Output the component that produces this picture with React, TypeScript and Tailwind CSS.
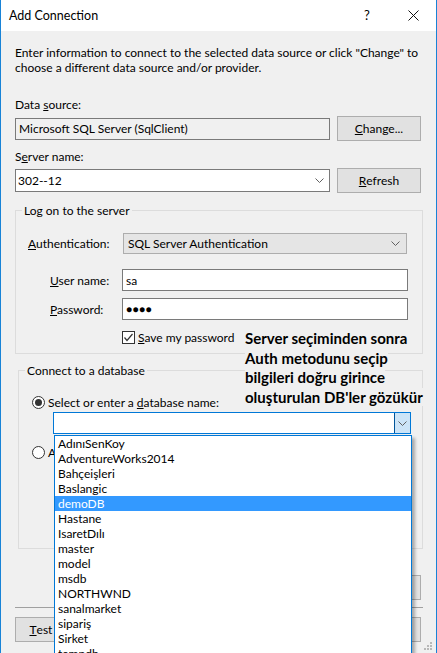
import React from "react";

const font = { fontFamily: "Lato, 'Open Sans', 'Noto Sans', sans-serif" };

function Chevron() {
  return (
    <svg width="9" height="5" viewBox="0 0 9 5" className="shrink-0">
      <polyline points="0.5,0.5 4.5,4.5 8.5,0.5" fill="none" stroke="#606060" strokeWidth="1" />
    </svg>
  );
}

function Button({ children, className = "" }: { children: React.ReactNode; className?: string }) {
  return (
    <div className={`flex h-[25px] items-center justify-center border border-[#adadad] bg-[#e1e1e1] ${className}`}>
      {children}
    </div>
  );
}

function Radio({ checked }: { checked?: boolean }) {
  return (
    <div className="flex h-[13px] w-[13px] shrink-0 items-center justify-center rounded-full border border-[#333] bg-white">
      {checked ? <div className="h-[7px] w-[7px] rounded-full bg-[#333]" /> : null}
    </div>
  );
}

const databases = [
  "AdınıSenKoy",
  "AdventureWorks2014",
  "Bahçeişleri",
  "Baslangic",
  "demoDB",
  "Hastane",
  "IsaretDılı",
  "master",
  "model",
  "msdb",
  "NORTHWND",
  "sanalmarket",
  "sipariş",
  "Sirket",
  "tempdb",
];

const note = ["Server seçiminden sonra", "Auth metodunu seçip", "bilgileri doğru girince", "oluşturulan DB'ler gözükür"];

export default function App() {
  return (
    <div
      style={font}
      className="relative h-[653px] w-[437px] overflow-hidden border-x border-[#1883d7] bg-[#f0f0f0] text-[12px] leading-[15px] text-black"
    >
      {/* title bar */}
      <div className="flex h-[31px] items-center bg-white">
        <span className="pl-[8px] text-[12.5px]">Add Connection</span>
        <div className="ml-auto flex h-full">
          <div className="flex w-[46px] items-center justify-center text-[13px]">?</div>
          <div className="flex w-[46px] items-center justify-center">
            <svg width="11" height="11" viewBox="0 0 11 11">
              <path d="M0.5 0.5 L10.5 10.5 M10.5 0.5 L0.5 10.5" stroke="#111" strokeWidth="1" />
            </svg>
          </div>
        </div>
      </div>

      <div className="flex flex-col pl-[14px] pr-[15px]">
        <p className="pt-[14px]">
          Enter information to connect to the selected data source or click "Change" to
          <br />
          choose a different data source and/or provider.
        </p>

        <div className="mt-[22px]">
          Data <span className="underline">s</span>ource:
        </div>
        <div className="mt-[4px] flex items-center gap-[7px]">
          <div className="flex h-[22px] w-[315px] items-center border border-[#7a7a7a] bg-[#f0f0f0] pl-[3px]">
            Microsoft SQL Server (SqlClient)
          </div>
          <Button className="w-[84px]">
            <span className="underline">C</span>hange...
          </Button>
        </div>

        <div className="mt-[8px]">
          S<span className="underline">e</span>rver name:
        </div>
        <div className="mt-[4px] flex items-center gap-[7px]">
          <div className="flex h-[23px] w-[315px] items-center border border-[#7a7a7a] bg-white pl-[2px] pr-[5px]">
            <span className="flex-1">302--12</span>
            <Chevron />
          </div>
          <Button className="h-[24px] w-[84px]">
            <span className="underline">R</span>efresh
          </Button>
        </div>

        <fieldset className="mr-[-2px] mt-[10px] border border-[#dcdcdc] pb-[9px]">
          <legend className="ml-[6px] px-[2px]">Log on to the server</legend>
          <div className="mt-[15px] flex items-center">
            <div className="w-[107px] pl-[12px]">
              <span className="underline">A</span>uthentication:
            </div>
            <div className="flex h-[21px] w-[284px] items-center border border-[#adadad] bg-[#e5e5e5] pl-[4px] pr-[6px]">
              <span className="flex-1">SQL Server Authentication</span>
              <Chevron />
            </div>
          </div>
          <div className="mt-[15px] flex items-center">
            <div className="w-[106px] pl-[34px]">
              <span className="underline">U</span>ser name:
            </div>
            <div className="flex h-[22px] w-[286px] items-center border border-[#7a7a7a] bg-white pl-[3px]">sa</div>
          </div>
          <div className="mt-[7px] flex items-center">
            <div className="w-[106px] pl-[34px]">
              <span className="underline">P</span>assword:
            </div>
            <div className="flex h-[22px] w-[286px] items-center border border-[#7a7a7a] bg-white pl-[3px] text-[10px] tracking-[0.5px]">
              ●●●●
            </div>
          </div>
          <div className="mt-[11px] flex h-[13px] items-center pl-[106px]">
            <div className="flex h-[13px] w-[13px] items-center justify-center border border-[#333] bg-white">
              <svg width="11" height="11" viewBox="0 0 11 11">
                <polyline points="1.5,5.5 4,8.5 9.5,2" fill="none" stroke="#333" strokeWidth="1.2" />
              </svg>
            </div>
            <span className="ml-[3px]">
              <span className="underline">S</span>ave my password
            </span>
          </div>
        </fieldset>

        <fieldset className="ml-[3px] mr-[-2px] mt-[9px] border border-[#dcdcdc] pb-[12px]">
          <legend className="ml-[6px] px-[2px]">Connect to a database</legend>
          <div className="mt-[17px] flex items-center pl-[13px]">
            <Radio checked />
            <span className="ml-[3px]">
              Select or enter a <span className="underline">d</span>atabase name:
            </span>
          </div>
          <div className="ml-[34px] mt-[2px] flex h-[22px] w-[358px] border border-[#0078d7] bg-white">
            <div className="flex-1" />
            <div className="flex w-[16px] items-center justify-center border-l border-[#005499] bg-[#cce4f7]">
              <Chevron />
            </div>
          </div>
          <div className="mt-[11px] flex items-center pl-[13px]">
            <Radio />
            <span className="ml-[3px] whitespace-nowrap">Attach a database file:</span>
          </div>
          <div className="ml-[40px] mt-[3px] flex items-center gap-[7px]">
            <div className="h-[23px] w-[271px] border border-[#7a7a7a] bg-white" />
            <Button className="h-[23px] w-[70px]">Browse...</Button>
          </div>
          <div className="ml-[40px] mt-[8px]">Logical name:</div>
          <div className="ml-[40px] mt-[3px] h-[22px] w-[348px] border border-[#7a7a7a] bg-white" />
        </fieldset>

        <Button className="mt-[26px] h-[24px] w-[84px] self-end">Advanced...</Button>

        <div className="mr-[-2px] mt-[7px] border-t border-[#a0a0a0]" />

        <div className="mt-[9px] flex items-center gap-[7px]">
          <Button className="h-[24px] w-[116px]">
            <span className="underline">T</span>est Connection
          </Button>
          <div className="flex-1" />
          <Button className="h-[24px] w-[75px]">OK</Button>
          <Button className="h-[24px] w-[84px]">Cancel</Button>
        </div>
      </div>

      {/* resize grip */}
      <div className="absolute bottom-[3px] right-[4px] grid grid-cols-3 gap-[1px]">
        {[0, 0, 1, 0, 1, 1, 1, 1, 1].map((v, i) => (
          <div key={i} className={`h-[2px] w-[2px] ${v ? "bg-[#b8b8b8]" : ""}`} />
        ))}
      </div>

      {/* annotation */}
      <div className="absolute left-[244px] top-[329px] whitespace-nowrap text-[15px] font-bold leading-[19.5px]">
        {note.map((l) => (
          <div key={l}>
            <span className="bg-[#f0f0f0]">{l}</span>
          </div>
        ))}
      </div>

      {/* dropdown list */}
      <div className="absolute left-[53px] top-[435px] w-[358px] border border-[#0078d7] bg-white shadow-[3px_3px_3px_rgba(0,0,0,0.3)]">
        {databases.map((d) => (
          <div key={d} className={`h-[15px] pl-[3px] leading-[15px] ${d === "demoDB" ? "bg-[#3399ff] text-white" : ""}`}>
            {d}
          </div>
        ))}
      </div>
    </div>
  );
}
